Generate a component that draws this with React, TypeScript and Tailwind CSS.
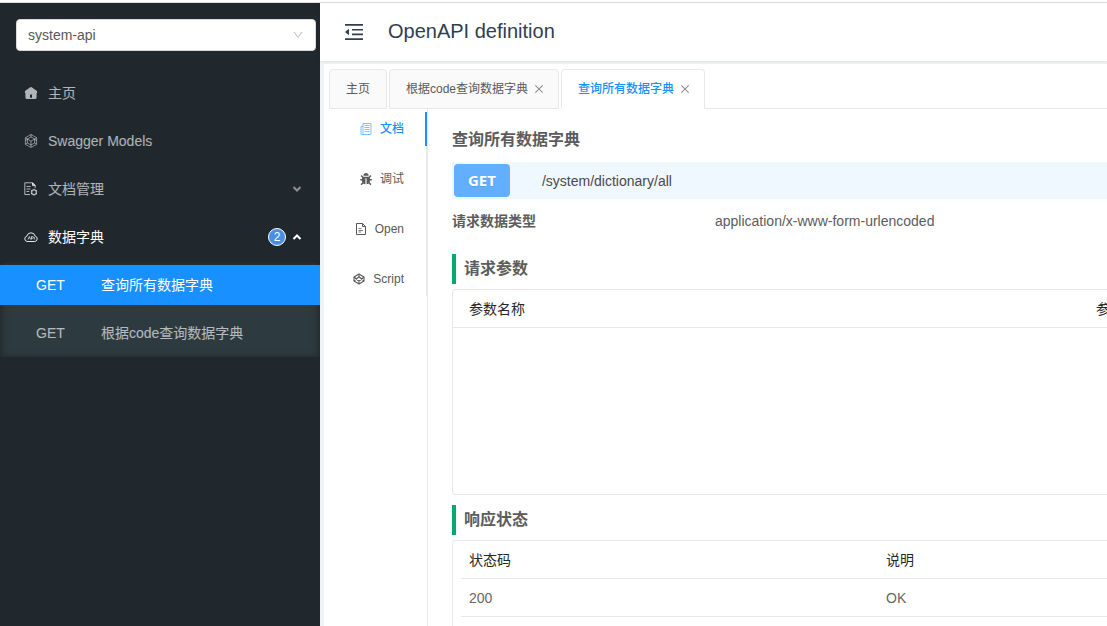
import type { ReactNode } from 'react';
import { AiOutlineClose, AiOutlineDown } from 'react-icons/ai';
import { FaBug } from 'react-icons/fa';

function HomeIcon() {
  return (
    <svg viewBox="0 0 14 14" className="size-3.5" fill="currentColor" aria-hidden="true">
      <path
        fillRule="evenodd"
        d="M6.3 1.3a1.2 1.2 0 0 1 1.4 0l4.6 3.3c.6.4.9 1 .9 1.6 0 .5-.2.8-.6 1v4.4c0 .8-.5 1.3-1.3 1.3H2.700c-.8 0-1.3-.5-1.3-1.3V7.200C1 7 .8 6.700.8 6.200c0-.6.3-1.200.9-1.600zM6 11.800h2V9.200a1 1 0 0 0-2 0z"
      />
    </svg>
  );
}

function ModelsIcon() {
  return (
    <svg viewBox="0 0 14 14" className="size-3.5" fill="none" stroke="currentColor" strokeWidth=".7" aria-hidden="true">
      <path d="M7 .5l5.600 3.200v6.600L7 13.500l-5.600-3.200V3.700z" />
      <path d="M7 3l3.600 2v4L7 11 3.400 9V5z" />
      <path d="M7 .5V3M12.600 3.800L10.600 5M12.600 10.200L10.600 9M7 13.200V11M1.400 10.200L3.400 9M1.400 3.800L3.400 5M3.400 5L7 7.200 10.600 5M7 7.200V11M1.400 7l2-2M12.600 7l-2-2" />
    </svg>
  );
}

function DocGearIcon() {
  return (
    <svg viewBox="0 0 14 14" className="size-3.5" fill="none" stroke="currentColor" aria-hidden="true">
      <path d="M6 12.500H.8V.8h7.700l2.700 2.800v2.400" />
      <path d="M8.500.8v2.800h2.700z" fill="currentColor" />
      <path d="M2.500 4.500h4M2.500 7h4M2.500 9.500h2.800" />
      <circle cx="10" cy="10.200" r="2.400" strokeWidth="1.300" />
      <path d="M10 6.800v1M10 12.600v1M7 8.500l.9.5M12.100 11.400l.9.5M7 11.900l.9-.5M12.100 9l.9-.5" />
    </svg>
  );
}

function CloudApiIcon() {
  return (
    <svg viewBox="0 0 14 14" className="size-3.5" fill="none" stroke="currentColor" strokeWidth=".9" aria-hidden="true">
      <path d="M3.200 11.500a2.700 2.700 0 0 1-.4-5.300 4.300 4.300 0 0 1 8.400 0 2.700 2.700 0 0 1-.4 5.300z" />
      <path d="M4 9.500l1.300-3 1.200 3M7.500 9.500v-3h1a.9.9 0 0 1 0 1.800h-1M10.300 7v2.500" strokeWidth=".7" />
    </svg>
  );
}

function MenuFoldIcon() {
  return (
    <svg viewBox="0 0 20 20" className="size-5" fill="currentColor" aria-hidden="true">
      <path d="M1 2h18v1.800H1zM8 7h11v1.600H8zM8 11.600h11v1.600H8zM1 16.200h18V18H1zM1 10l4-3.200v6.400z" />
    </svg>
  );
}

function Caret({ up }: { up?: boolean }) {
  return (
    <svg
      viewBox="0 0 10 10"
      className={`mr-0.5 size-2.5 ${up ? '' : 'rotate-180 opacity-75'}`}
      fill="none"
      stroke="currentColor"
      strokeWidth="2"
      aria-hidden="true"
    >
      <path d="M1.500 7L5 3.500 8.500 7" />
    </svg>
  );
}

function PagesIcon() {
  return (
    <svg viewBox="0 0 12 12" className="size-3" fill="none" stroke="currentColor" strokeWidth=".8" opacity=".7" aria-hidden="true">
      <path d="M3 .5h8v10.500a.5.5 0 0 1-.5.5H1.500a.5.5 0 0 1-.5-.5V3.500h2z M3 3.500V11.500" />
      <path d="M4.500 2.500h5M4.500 4.500h5M4.500 6.500h5M4.500 8.500h5" />
    </svg>
  );
}

function FileIcon() {
  return (
    <svg viewBox="0 0 12 12" className="size-3" fill="none" stroke="currentColor" aria-hidden="true">
      <path d="M1.500.5h6l3 3v8h-9z" />
      <path d="M7.500.5v3h3" />
      <path d="M3.500 5.500h3M3.500 7.500h4.500M3.500 9h2.500" strokeWidth=".8" />
    </svg>
  );
}

function ScriptIcon() {
  return (
    <svg viewBox="0 0 12 12" className="size-3" fill="none" stroke="currentColor" strokeWidth="1.100" aria-hidden="true">
      <path d="M6 1l5 3v4l-5 3-5-3V4z" strokeLinejoin="round" />
      <path d="M6 1v2.800M6 8.200V11M1 4l5 4.200L11 4M1 8l5-4.200L11 8" />
    </svg>
  );
}

function MenuItem({ icon, label, active, children }: { icon: ReactNode; label: string; active?: boolean; children?: ReactNode }) {
  return (
    <a
      href="#"
      className={`flex h-10 items-center gap-2.5 pr-4 pl-6 ${active ? 'text-white' : 'text-white/65'}`}
    >
      {icon}
      <span className="flex-1">{label}</span>
      {children}
    </a>
  );
}

function SubItem({ label, active }: { label: string; active?: boolean }) {
  return (
    <a href="#" className={`flex h-10 items-center pl-9 ${active ? 'bg-[#1890ff] text-white' : 'text-white/65'}`}>
      <span className="w-[65px]">GET</span>
      <span>{label}</span>
    </a>
  );
}

function Sidebar() {
  return (
    <aside className="w-80 shrink-0 bg-[#20282e]">
      <div className="relative mt-4 mr-1 ml-4">
        <select
          aria-label="API group"
          className="block h-8 w-full appearance-none rounded border border-[#d9d9d9] bg-white px-[11px] text-[#595959]"
        >
          <option>system-api</option>
        </select>
        <AiOutlineDown className="pointer-events-none absolute top-2.5 right-3 size-3 text-[#bfbfbf]" />
      </div>
      <nav className="mt-[22px] flex flex-col gap-2">
        <MenuItem icon={<HomeIcon />} label="主页" />
        <MenuItem icon={<ModelsIcon />} label="Swagger Models" />
        <MenuItem icon={<DocGearIcon />} label="文档管理">
          <Caret />
        </MenuItem>
        <div>
          <MenuItem icon={<CloudApiIcon />} label="数据字典" active>
            <span className="-mr-1 flex size-[18px] items-center justify-center rounded-full border border-white bg-[#4a90e2] text-xs leading-none text-white">
              2
            </span>
            <Caret up />
          </MenuItem>
          <div className="mt-1 flex flex-col gap-2 bg-[#2d3a40] py-1 shadow-[inset_0_2px_8px_rgba(0,0,0,0.45)]">
            <SubItem label="查询所有数据字典" active />
            <SubItem label="根据code查询数据字典" />
          </div>
        </div>
      </nav>
    </aside>
  );
}

function PageTab({ label, active, closable }: { label: string; active?: boolean; closable?: boolean }) {
  return (
    <div
      className={`flex h-10 items-center gap-[5px] rounded-t border border-[#e8e8e8] pl-4 text-xs ${
        active ? 'border-b-white bg-white text-[#1890ff]' : 'bg-[#fafafa] text-[#595959]'
      } ${closable ? 'pr-[13px]' : 'pr-4'}`}
    >
      <button type="button" className={active ? 'font-medium' : ''}>{label}</button>
      {closable && (
        <button type="button" aria-label="Close" className="text-[#8c8c8c]">
          <AiOutlineClose className="size-3" />
        </button>
      )}
    </div>
  );
}

function SideTab({ icon, label, active }: { icon: ReactNode; label: string; active?: boolean }) {
  return (
    <button
      type="button"
      className={`flex h-[34px] items-center justify-end gap-2 text-xs ${
        active ? '-mr-px border-r-2 border-[#1890ff] pr-[21px] font-medium text-[#1890ff]' : 'pr-[22px] text-[#595959]'
      }`}
    >
      {icon}
      {label}
    </button>
  );
}

function SectionTitle({ children }: { children: ReactNode }) {
  return (
    <h3 className="flex h-[30px] items-center border-l-4 border-[#00ab6d] pl-2 text-base font-bold text-[#5c5c5c]">
      {children}
    </h3>
  );
}

const th = 'h-[38px] border-b border-[#e8e8e8] px-2 py-0 text-left font-normal text-[#262626]';
const td = 'h-[38px] border-b border-[#e8e8e8] px-2 py-0 text-[#666]';

export default function App() {
  return (
    <div className="flex h-screen flex-col overflow-hidden bg-white font-['Liberation_Sans','Noto_Sans_CJK_SC',sans-serif] text-sm">
      <div className="h-[3px] shrink-0 border-b border-[#ddd]" />
      <div className="flex min-h-0 flex-1">
        <Sidebar />
        <div className="flex min-w-0 flex-1 flex-col bg-[#f0f2f5]">
          <header className="flex h-[58px] shrink-0 items-center gap-6 bg-white pl-6 text-[#2f3e50] shadow-[0_1px_4px_rgba(0,21,41,0.08)]">
            <button type="button" aria-label="Collapse menu">
              <MenuFoldIcon />
            </button>
            <h1 className="pb-0.5 text-xl">OpenAPI definition</h1>
          </header>
          <main className="mt-[3px] ml-1 flex min-h-0 flex-1 flex-col bg-white">
            <div className="mt-[5px] flex shrink-0">
              <div className="w-[5px]" />
              <div className="flex gap-0.5">
                <PageTab label="主页" />
                <PageTab label="根据code查询数据字典" closable />
                <PageTab label="查询所有数据字典" active closable />
              </div>
              <div className="flex-1 border-b border-[#e8e8e8]" />
            </div>
            <div className="flex min-h-0 flex-1">
              <div className="w-[104px] shrink-0 border-r border-[#e8e8e8] pt-[3px]">
                <div className="flex h-[184px] flex-col gap-4 border-r border-[#e8e8e8]">
                  <SideTab icon={<PagesIcon />} label="文档" active />
                  <SideTab icon={<FaBug className="size-3" />} label="调试" />
                  <SideTab icon={<FileIcon />} label="Open" />
                  <SideTab icon={<ScriptIcon />} label="Script" />
                </div>
              </div>
              <div className="min-w-0 flex-1 overflow-hidden pl-6">
                <h2 className="mt-[19px] text-base font-bold text-[#5c5c5c]">查询所有数据字典</h2>
                <div className="mt-2.5 flex h-[37px] items-center gap-8 bg-[#eff7ff] pl-0.5">
                  <span className="rounded-sm bg-[#61affe] px-3.5 py-1.5 font-['Open_Sans',sans-serif] text-[15px] leading-[21px] font-bold text-white [text-shadow:0_1px_0_rgba(0,0,0,0.1)]">
                    GET
                  </span>
                  <span className="text-[#4a4a4a]">/system/dictionary/all</span>
                </div>
                <div className="mt-3 flex text-[#5c5c5c]">
                  <span className="w-[263px] font-bold">请求数据类型</span>
                  <span>application/x-www-form-urlencoded</span>
                </div>
                <div className="mt-[23px]">
                  <SectionTitle>请求参数</SectionTitle>
                </div>
                <div className="mt-[5px] h-[206px] rounded-l border-y border-l border-[#e8e8e8]">
                  <table className="w-full table-fixed border-separate border-spacing-0">
                    <thead>
                      <tr>
                        <th className={`${th} w-[635px] pl-4`}>参数名称</th>
                        <th className={`${th} whitespace-nowrap`}>参</th>
                      </tr>
                    </thead>
                  </table>
                </div>
                <div className="mt-2.5">
                  <SectionTitle>响应状态</SectionTitle>
                </div>
                <div className="mt-[5px] h-[206px] rounded-l border-y border-l border-[#e8e8e8] pl-2">
                  <table className="w-full table-fixed border-separate border-spacing-0">
                    <thead>
                      <tr>
                        <th className={`${th} w-[417px]`}>状态码</th>
                        <th className={th}>说明</th>
                      </tr>
                    </thead>
                    <tbody>
                      <tr>
                        <td className={td}>200</td>
                        <td className={td}>OK</td>
                      </tr>
                    </tbody>
                  </table>
                </div>
              </div>
            </div>
          </main>
        </div>
      </div>
    </div>
  );
}
